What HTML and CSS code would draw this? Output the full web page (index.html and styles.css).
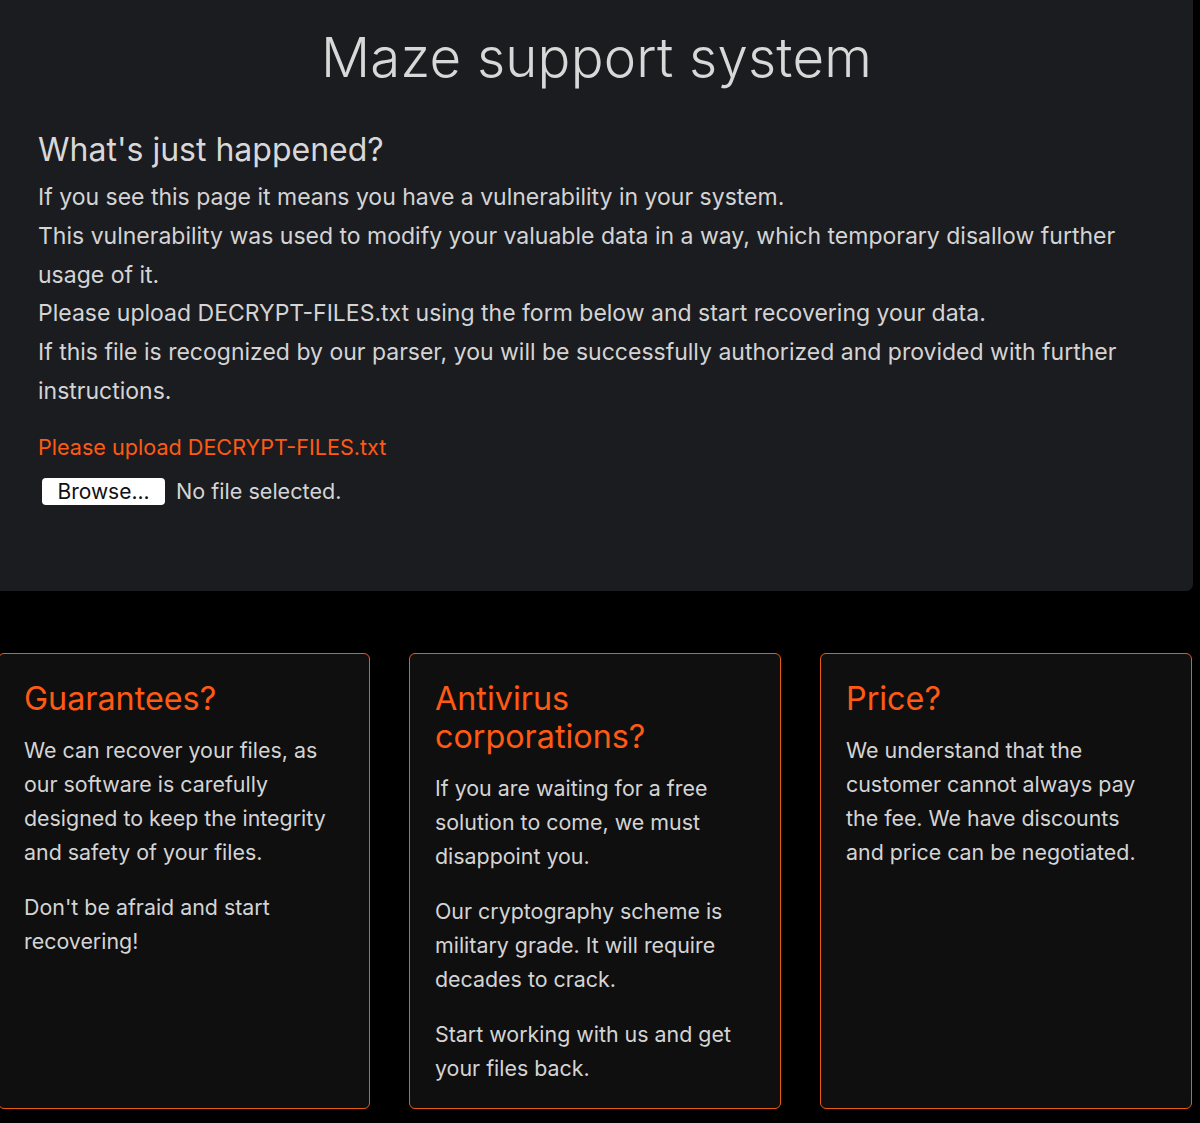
FILE: index.html
```html
<!DOCTYPE html>
<html lang="en">
<head>
<meta charset="utf-8">
<title>Maze support system</title>
<link rel="stylesheet" href="styles.css">
</head>
<body>
<header class="panel">
  <h1 class="title">Maze support system</h1>
  <h2 class="subtitle">What's just happened?</h2>
  <div class="intro">
    <p>If you see this page it means you have a vulnerability in your system.</p>
    <p>This vulnerability was used to modify your valuable data in a way, which temporary disallow further usage of it.</p>
    <p>Please upload DECRYPT-FILES.txt using the form below and start recovering your data.</p>
    <p>If this file is recognized by our parser, you will be successfully authorized and provided with further instructions.</p>
  </div>
  <div class="upload-label">Please upload DECRYPT-FILES.txt</div>
  <div class="file-row">
    <span class="browse">Browse...</span>
    <span class="file-status">No file selected.</span>
  </div>
</header>
<section class="cards">
  <article class="card">
    <h3 class="card-title">Guarantees?</h3>
    <p>We can recover your files, as our software is carefully designed to keep the integrity and safety of your files.</p>
    <p>Don't be afraid and start recovering!</p>
  </article>
  <article class="card">
    <h3 class="card-title">Antivirus corporations?</h3>
    <p>If you are waiting for a free solution to come, we must disappoint you.</p>
    <p>Our cryptography scheme is military grade. It will require decades to crack.</p>
    <p>Start working with us and get your files back.</p>
  </article>
  <article class="card">
    <h3 class="card-title">Price?</h3>
    <p>We understand that the customer cannot always pay the fee. We have discounts and price can be negotiated.</p>
  </article>
</section>
</body>
</html>
```
FILE: styles.css
```css
* { box-sizing: border-box; }
html, body { margin: 0; padding: 0; }
body {
  background: #000;
  color: #d6d6d6;
  font-family: Inter, "Noto Sans", "Liberation Sans", sans-serif;
  overflow: hidden;
}
.panel {
  width: 1193px;
  height: 591px;
  background: #1b1c20;
  border-radius: 0 0 7px 0;
  padding: 22px 38px 0 38px;
}
.title {
  margin: 0;
  text-align: center;
  font-size: 54.6px;
  font-weight: 300;
  line-height: 70px;
  color: #d8d8d8;
  letter-spacing: 0.2px;
}
.subtitle {
  margin: 38px 0 0 0;
  font-size: 32px;
  font-weight: 400;
  line-height: 40px;
  color: #d8d8d8;
}
.intro { margin-top: 8px; }
.intro p {
  margin: 0;
  font-size: 23px;
  line-height: 38.8px;
  color: #d4d4d4;
}
.upload-label {
  margin-top: 21px;
  font-size: 21.6px;
  line-height: 30px;
  color: #ff5a14;
}
.file-row {
  margin-top: 16px;
  display: flex;
  align-items: center;
  gap: 11px;
  padding-left: 4px;
}
.browse {
  display: inline-block;
  background: #fff;
  color: #111;
  border-radius: 4px;
  width: 123px;
  height: 27px;
  line-height: 27px;
  text-align: center;
  font-size: 21px;
}
.file-status {
  font-size: 21.6px;
  color: #d4d4d4;
}
.cards {
  display: flex;
  gap: 39px;
  margin-top: 62px;
  margin-left: -2px;
}
.card {
  width: 372px;
  height: 456px;
  flex: none;
  background: #0f0f0f;
  border: 1.5px solid #ea5a12;
  border-radius: 6px;
  padding: 26px 32px 0 25px;
}
.card-title {
  margin: 0 0 15px 0;
  font-size: 32.3px;
  font-weight: 400;
  line-height: 38px;
  color: #ff5a14;
}
.card p {
  margin: 0 0 21px 0;
  font-size: 21.4px;
  line-height: 34px;
  color: #d4d4d4;
}
```
